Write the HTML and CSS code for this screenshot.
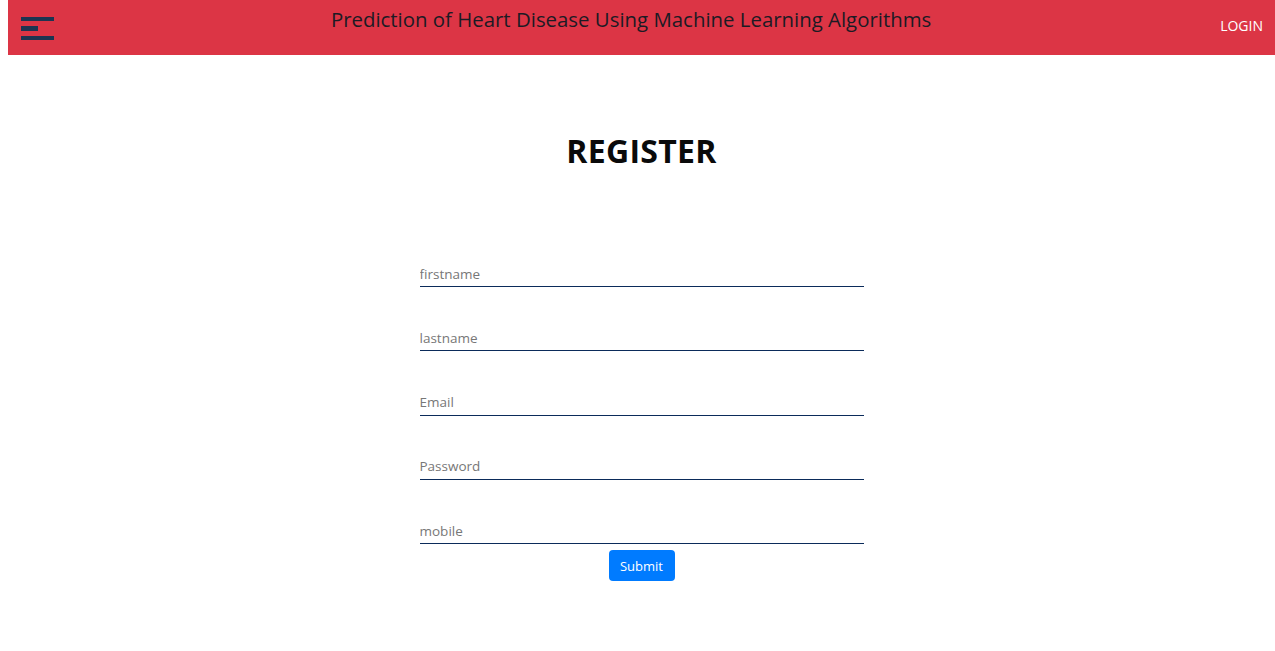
FILE: index.html
```html
<!DOCTYPE html>
<html>
<head>
<meta charset="utf-8">
<link rel="stylesheet" href="styles.css">
</head>
<body>
<header class="topbar">
  <div class="burger">
    <span class="bar"></span>
    <span class="bar short"></span>
    <span class="bar"></span>
  </div>
  <h1 class="title">Prediction of Heart Disease Using Machine Learning Algorithms</h1>
  <a class="login" href="#">LOGIN</a>
</header>
<main class="main">
  <h2 class="heading">REGISTER</h2>
  <form class="form">
    <input class="field" type="text" placeholder="firstname">
    <input class="field" type="text" placeholder="lastname">
    <input class="field" type="text" placeholder="Email">
    <input class="field" type="password" placeholder="Password">
    <input class="field" type="text" placeholder="mobile">
    <button class="submit" type="button">Submit</button>
  </form>
</main>
</body>
</html>
```
FILE: styles.css
```css
html, body {
  margin: 0;
  padding: 0;
  background: #ffffff;
  font-family: "Open Sans", "Liberation Sans", sans-serif;
}
body {
  padding-left: 8px;
}
.topbar {
  height: 55px;
  background: #dc3545;
  display: flex;
  align-items: flex-start;
}
.burger {
  display: flex;
  flex-direction: column;
  gap: 5px;
  padding: 17px 0 0 13px;
  width: 33px;
}
.bar {
  display: block;
  height: 4px;
  width: 33px;
  background: #1d3451;
}
.bar.short {
  width: 17px;
  height: 5px;
}
.title {
  flex: 1;
  margin: 0;
  padding: 6px 12px 0 0;
  text-align: center;
  font-weight: 400;
  font-size: 20.4px;
  line-height: 26px;
  color: #1b1b24;
}
.login {
  margin: 17px 12px 0 0;
  color: #ffffff;
  text-decoration: none;
  font-size: 14px;
  line-height: 18px;
}
.main {
  display: flex;
  flex-direction: column;
  align-items: center;
}
.heading {
  margin: 78px 0 0;
  font-size: 32px;
  line-height: 36px;
  font-weight: 700;
  color: #0a0a0a;
  letter-spacing: 0.3px;
}
.form {
  margin-top: 88px;
  width: 444px;
  display: flex;
  flex-direction: column;
  align-items: center;
}
.field {
  box-sizing: border-box;
  width: 444px;
  height: 30px;
  margin: 0 0 34.25px;
  padding: 4px 0 0;
  border: none;
  border-bottom: 1px solid #0b2b5a;
  font-family: inherit;
  font-size: 13.5px;
  color: #333;
  outline: none;
  background: transparent;
}
.field::placeholder {
  color: #777;
}
.field:last-of-type {
  margin-bottom: 6px;
}
.submit {
  width: 66px;
  height: 31px;
  border: none;
  border-radius: 4px;
  background: #007bff;
  color: #fff;
  font-family: inherit;
  font-size: 13px;
  padding: 0;
}
```
